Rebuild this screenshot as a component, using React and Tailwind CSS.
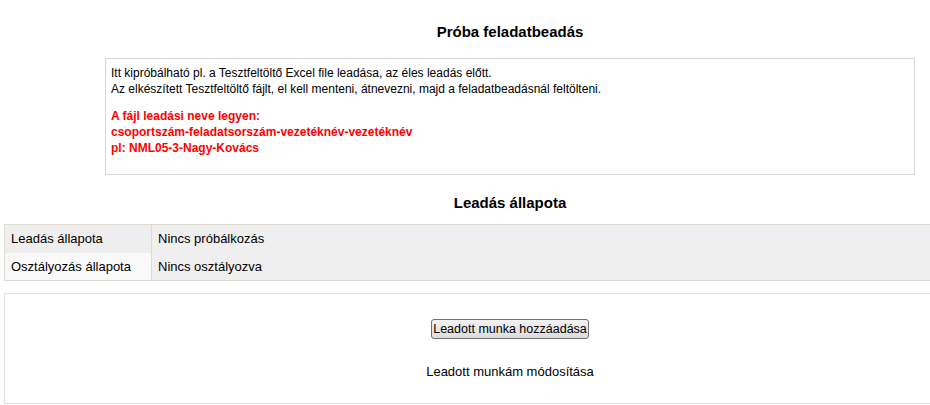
export default function App() {
  return (
    <div className="w-[930px] h-[405px] overflow-hidden bg-white text-black" style={{ fontFamily: '"Liberation Sans", Arial, sans-serif' }}>
      <div className="ml-[4px] w-[1012px]">
        <h2 className="pt-[23px] h-[58px] text-center text-[15px] font-bold leading-[18px]">Próba feladatbeadás</h2>
        <div className="mx-auto w-[810px] h-[117px] border border-[#d6d6d6] px-[5px] pt-[6px] text-[12px] leading-[16px]">
          <p>Itt kipróbálható pl. a Tesztfeltöltő Excel file leadása, az éles leadás előtt.<br />Az elkészített Tesztfeltöltő fájlt, el kell menteni, átnevezni, majd a feladatbeadásnál feltölteni.</p>
          <p className="mt-[11px] font-bold text-[#ff0000]">A fájl leadási neve legyen:<br />csoportszám-feladatsorszám-vezetéknév-vezetéknév<br />pl: NML05-3-Nagy-Kovács</p>
        </div>
        <h3 className="pt-[19px] h-[49px] text-center text-[15px] font-bold leading-[18px]">Leadás állapota</h3>
        <div className="border border-[#dedbd3] text-[13px] leading-[16px]">
          <div className="flex h-[28px]">
            <div className="w-[147px] bg-[#eeeeee] border-r border-[#dedbd3] px-[6px] flex items-center">Leadás állapota</div>
            <div className="flex-1 bg-[#efefef] px-[6px] flex items-center">Nincs próbálkozás</div>
          </div>
          <div className="flex h-[27px]">
            <div className="w-[147px] bg-[#f9f9f9] border-r border-[#dedbd3] px-[6px] flex items-center">Osztályozás állapota</div>
            <div className="flex-1 bg-[#efefef] px-[6px] flex items-center">Nincs osztályozva</div>
          </div>
        </div>
        <div className="mt-[12px] h-[111px] border border-[#e3e0d8] flex flex-col items-center text-[13px]">
          <button className="mt-[25px] h-[20px] w-[158px] border border-[#707070] rounded-[3px] bg-gradient-to-b from-[#f2f2f2] to-[#dcdcdc] text-[12.5px] leading-[16px] whitespace-nowrap">Leadott munka hozzáadása</button>
          <div className="mt-[25px] leading-[16px]">Leadott munkám módosítása</div>
        </div>
      </div>
    </div>
  );
}
